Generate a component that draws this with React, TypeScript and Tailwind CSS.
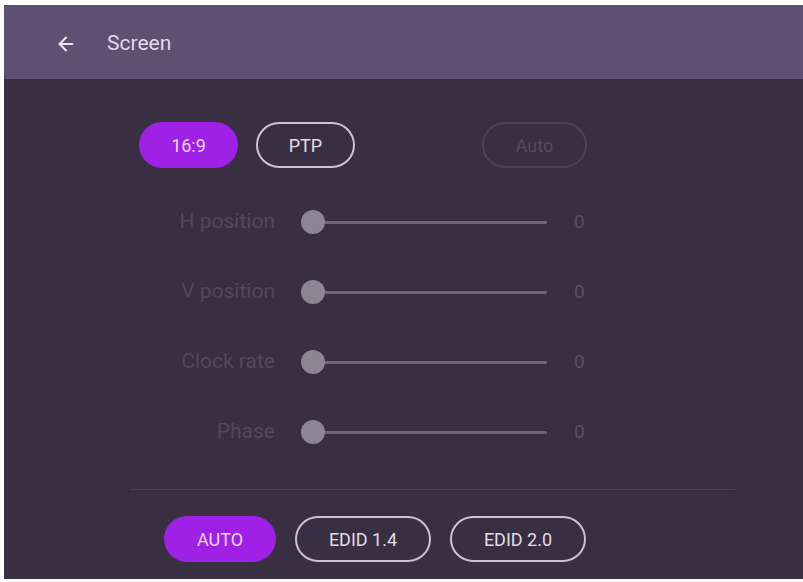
import { ArrowLeft } from "lucide-react";

const SLIDERS = ["H position", "V position", "Clock rate", "Phase"];

function Pill({ label, active, dim, w }: { label: string; active?: boolean; dim?: boolean; w: string }) {
  return (
    <div
      className={
        "flex h-[46px] items-center justify-center rounded-full text-[18px] " +
        w +
        (active
          ? " bg-[#a021e6] text-[#f0d6fb]"
          : dim
            ? " border-2 border-[#4b4256] text-[#554b5f]"
            : " border-2 border-[#c9c3cf] text-[#e1dde5]")
      }
    >
      {label}
    </div>
  );
}

export default function App() {
  return (
    <div className="h-[582px] w-[803px] bg-white pl-[4px] pt-[5px] pb-[3px]" style={{ fontFamily: "Roboto, 'Liberation Sans', sans-serif" }}>
      <div className="flex h-full flex-col bg-[#382f42]">
        {/* Header */}
        <div className="flex h-[74px] items-center bg-[#5e5072] pt-[4px]">
          <ArrowLeft className="ml-[51px] h-[22px] w-[22px] text-[#ece6f3]" strokeWidth={2.2} />
          <span className="ml-[30px] text-[21px] text-[#e2d8ee]">Screen</span>
        </div>

        {/* Aspect buttons */}
        <div className="mt-[43px] flex pl-[135px]">
          <Pill label="16:9" active w="w-[99px]" />
          <div className="ml-[18px]">
            <Pill label="PTP" w="w-[99px]" />
          </div>
          <div className="ml-[127px]">
            <Pill label="Auto" dim w="w-[105px]" />
          </div>
        </div>

        {/* Sliders */}
        <div className="mt-[42px] flex flex-col gap-[46px]">
          {SLIDERS.map((s) => (
            <div key={s} className="flex h-[24px] items-center">
              <span className="w-[271px] text-right text-[21px] text-[#52485c]">{s}</span>
              <div className="relative ml-[26px] flex h-[24px] w-[246px] items-center">
                <div className="ml-[12px] h-[3px] w-[234px] rounded bg-[#6c6576]" />
                <div className="absolute left-0 top-0 h-[24px] w-[24px] rounded-full bg-[#8c8593]" />
              </div>
              <span className="ml-[27px] text-[19px] text-[#5a5064]">0</span>
            </div>
          ))}
        </div>

        {/* Divider */}
        <div className="mt-[45px] ml-[126px] h-px w-[605px] bg-[#4a4154]" />

        {/* EDID buttons */}
        <div className="mt-[26px] flex gap-[19px] pl-[160px]">
          <Pill label="AUTO" active w="w-[112px]" />
          <Pill label="EDID 1.4" w="w-[136px]" />
          <Pill label="EDID 2.0" w="w-[136px]" />
        </div>
      </div>
    </div>
  );
}
